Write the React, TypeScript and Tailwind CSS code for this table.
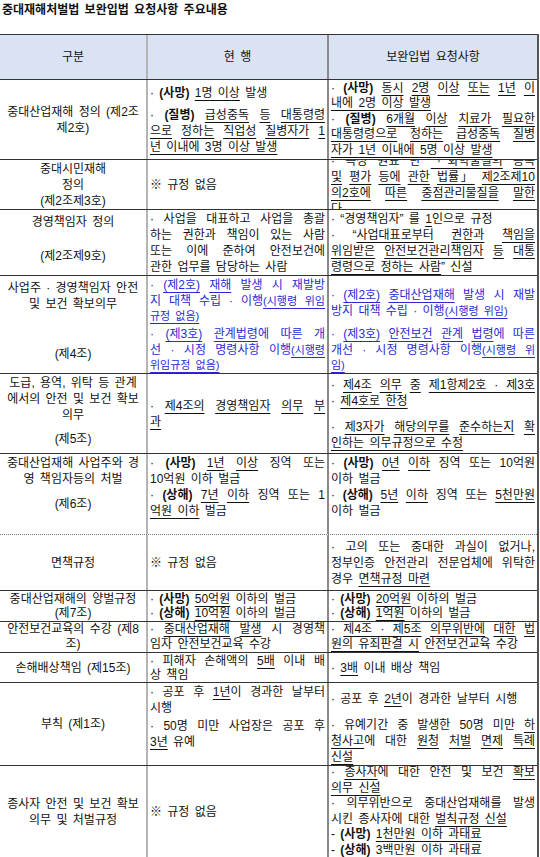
import type { ReactNode } from 'react'

// *x* bold, _x_ underlined, {x} small + underlined (시행령 notes)
function rich(src: string): ReactNode[] {
  const out: ReactNode[] = []
  const re = /\*([^*]+)\*|_([^_]+)_|\{([^}]+)\}/g
  let last = 0
  let k = 0
  let m: RegExpExecArray | null
  while ((m = re.exec(src))) {
    if (m.index > last) out.push(src.slice(last, m.index))
    if (m[1]) out.push(<b key={k++} className="font-bold">{m[1]}</b>)
    else if (m[2])
      out.push(
        <span key={k++} className="underline decoration-1 underline-offset-[3px]">
          {m[2]}
        </span>
      )
    else
      out.push(
        <span key={k++} className="text-[11px] underline decoration-1 underline-offset-[3px]">
          {m[3]}
        </span>
      )
    last = re.lastIndex
  }
  if (last < src.length) out.push(src.slice(last))
  return out
}

function L({ t, j, h = 'h-4 leading-4' }: { t: string; j?: boolean; h?: string }) {
  return <div className={`${h} ${j ? 'text-justify [text-align-last:justify]' : ''}`}>{rich(t)}</div>
}

function Gap({ h }: { h: string }) {
  return <div className={`${h} shrink-0`} />
}

type RowProps = {
  h: string
  a: ReactNode
  b: ReactNode
  c: ReactNode
  line?: string
  aCls?: string
  bCls?: string
  cCls?: string
  blue?: boolean
}

function Row({ h, a, b, c, line = 'border-b border-[#333]', aCls = 'justify-center', bCls = 'justify-center', cCls = 'justify-center', blue }: RowProps) {
  return (
    <div className={`flex ${h} ${line}`}>
      <div className={`flex w-[148px] shrink-0 flex-col items-center overflow-hidden border-r-2 border-[#b4b4b4] text-center ${aCls}`}>
        {a}
      </div>
      <div className={`flex w-[181px] shrink-0 flex-col overflow-hidden border-r-2 border-[#8a8a8a] px-[2px] ${bCls} ${blue ? 'text-[#2a2ad4]' : ''}`}>
        {b}
      </div>
      <div className={`flex min-w-0 flex-1 flex-col overflow-hidden px-[2px] ${cCls} ${blue ? 'text-[#2a2ad4]' : ''}`}>
        {c}
      </div>
    </div>
  )
}

const T = 'h-[15.5px] leading-[15.5px]'

export default function App() {
  return (
    <div className="h-[857px] w-[540px] overflow-hidden bg-white font-['Liberation_Sans','Noto_Sans_CJK_KR',sans-serif] text-[12px] text-[#111] [word-spacing:2px]">
      <div className="h-[34px] pl-[2px] pt-[2px] text-[12px] font-bold leading-4">중대재해처벌법 보완입법 요청사항 주요내용</div>

      <div className="w-[539px] border-r-2 border-[#555]">
        {/* header */}
        <div className="flex h-[46px] border-y border-[#333] bg-[#dae3f3]">
          <div className="grid w-[148px] shrink-0 place-items-center border-r-2 border-[#b4b4b4]">구분</div>
          <div className="grid w-[181px] shrink-0 place-items-center border-r-2 border-[#8a8a8a]">현 행</div>
          <div className="grid flex-1 place-items-center">보완입법 요청사항</div>
        </div>

        <Row
          h="h-[80px]"
          a={<><L t="중대산업재해 정의 (제2조" /><L t="제2호)" /></>}
          b={
            <>
              <L t="· *(사망)* _1명 이상_ 발생" />
              <Gap h="h-[6px]" />
              <L j t="· *(질병)* _급성중독_ _등_ _대통령령_" />
              <L j t="_으로_ _정하는_ _직업성_ _질병자가_ _1_" />
              <L t="_년 이내에 3명 이상 발생_" />
            </>
          }
          c={
            <>
              <L j h={T} t="· *(사망)* _동시_ _2명_ _이상_ _또는_ _1년_ _이_" />
              <L h={T} t="_내에 2명 이상 발생_" />
              <L j h={T} t="· *(질병)* _6개월_ _이상_ _치료가_ _필요한_" />
              <L j h={T} t="_대통령령으로_ _정하는_ _급성중독_ _질병_" />
              <L h={T} t="_자가 1년 이내에 5명 이상 발생_" />
            </>
          }
        />

        <Row
          h="h-[50px]"
          a={<><L t="중대시민재해" /><L t="정의" /><L t="(제2조제3호)" /></>}
          b={<L t="※ 규정 없음" />}
          c={
            <>
              <L j t="· 특정 원료 단 _「화학물질의_ _등록_" />
              <L j t="_및_ _평가_ _등에_ _관한_ _법률」_ _제2조제10_" />
              <L j t="_의2호에_ _따른_ _중점관리물질을_ _말한_" />
              <L t="_다_" />
            </>
          }
        />

        <Row
          h="h-[66px]"
          a={<><L t="경영책임자 정의" /><Gap h="h-[18px]" /><L t="(제2조제9호)" /><Gap h="h-[8px]" /></>}
          b={
            <>
              <L j t="· 사업을 대표하고 사업을 총괄" />
              <L j t="하는 권한과 책임이 있는 사람" />
              <L j t="또는 이에 준하여 안전보건에" />
              <L t="관한 업무를 담당하는 사람" />
            </>
          }
          c={
            <>
              <L t="· “경영책임자” 를 _1_인으로 규정" />
              <L j t="· “_사업대표로부터_ _권한과_ _책임을_" />
              <L j t="_위임받은_ _안전보건관리책임자_ _등_ _대통_" />
              <L t="_령령으로 정하는 사람_” 신설" />
            </>
          }
        />

        <Row
          h="h-[98px]"
          blue
          aCls="justify-between pt-[4px] pb-[11px]"
          cCls="justify-end pb-[1px]"
          a={
            <>
              <div><L t="사업주 · 경영책임자 안전" /><L t="및 보건 확보의무" /></div>
              <L t="(제4조)" />
            </>
          }
          b={
            <>
              <L j t="· _(제2호)_ _재해_ 발생 시 재발방" />
              <L j t="지 대책 수립 · 이행{(시행령 위임}" />
              <L h="h-[14px] leading-[14px]" t="{규정 없음)}" />
              <Gap h="h-[3px]" />
              <L j t="· _(제3호)_ _관계법령_에 따른 개" />
              <L j t="선 · 시정 명령사항 이행{(시행령}" />
              <L h="h-[14px] leading-[14px]" t="{위임규정 없음)}" />
            </>
          }
          c={
            <>
              <L j t="· _(제2호)_ _중대산업재해_ 발생 시 재발" />
              <L t="방지 대책 수립 · 이행{(시행령 위임)}" />
              <Gap h="h-[7px]" />
              <L j t="· _(제3호)_ _안전보건_ _관계_ _법령_에 따른" />
              <L j t="개선 · 시정 명령사항 이행{(시행령 위}" />
              <L h="h-[14px] leading-[14px]" t="{임)}" />
            </>
          }
        />

        <Row
          h="h-[80px]"
          aCls="justify-start pt-[1px]"
          a={
            <>
              <L t="도급, 용역, 위탁 등 관계" />
              <L t="에서의 안전 및 보건 확보" />
              <L t="의무" />
              <Gap h="h-[8px]" />
              <L t="(제5조)" />
            </>
          }
          b={
            <>
              <L j t="· _제4조의_ _경영책임자_ _의무_ _부_" />
              <L t="_과_" />
            </>
          }
          c={
            <>
              <L j t="· _제4조_ _의무_ _중_ _제1항제2호 · 제3호_" />
              <L t="· _제4호로 한정_" />
              <Gap h="h-[10px]" />
              <L j t="· _제3자가_ _해당의무를_ _준수하는지_ _확_" />
              <L t="_인하는 의무규정으로 수정_" />
            </>
          }
        />

        <Row
          h="h-[81px]"
          line="border-b border-dotted border-[#777]"
          aCls="justify-start pt-[1px]"
          bCls="justify-start pt-[1px]"
          cCls="justify-start pt-[1px]"
          a={
            <>
              <L t="중대산업재해 사업주와 경" />
              <L t="영 책임자등의 처벌" />
              <Gap h="h-[9px]" />
              <L t="(제6조)" />
            </>
          }
          b={
            <>
              <L j t="· *(사망)* _1년_ _이상_ 징역 또는" />
              <L t="10억원 이하 벌금" />
              <L j t="· *(상해)* _7년_ _이하_ 징역 또는 1" />
              <L t="_억원 이하_ 벌금" />
            </>
          }
          c={
            <>
              <L j t="· *(사망)* _0년_ _이하_ 징역 또는 10억원" />
              <L t="이하 벌금" />
              <L j t="· *(상해)* _5년_ _이하_ 징역 또는 _5천만원_" />
              <L t="이하 벌금" />
            </>
          }
        />

        <Row
          h="h-[56px]"
          cCls="justify-start pt-[4px]"
          a={<L t="면책규정" />}
          b={<L t="※ 규정 없음" />}
          c={
            <>
              <L j t="· 고의 또는 중대한 과실이 없거나," />
              <L j t="정부인증 안전관리 전문업체에 위탁한" />
              <L t="경우 _면책규정 마련_" />
            </>
          }
        />

        <Row
          h="h-[31px]"
          a={<><L h="h-[14px] leading-[14px]" t="중대산업재해의 양벌규정" /><L h="h-[14px] leading-[14px]" t="(제7조)" /></>}
          b={
            <>
              <L h="h-[14px] leading-[14px]" t="· *(사망)* _50억원_ 이하의 벌금" />
              <L h="h-[14px] leading-[14px]" t="· *(상해)* _10억원_ 이하의 벌금" />
            </>
          }
          c={
            <>
              <L h="h-[14px] leading-[14px]" t="· *(사망)* _20억원_ 이하의 벌금" />
              <L h="h-[14px] leading-[14px]" t="· *(상해)* _1억원_ 이하의 벌금" />
            </>
          }
        />

        <Row
          h="h-[31px]"
          a={<><L h="h-[15px] leading-[15px]" t="안전보건교육의 수강 (제8" /><L h="h-[15px] leading-[15px]" t="조)" /></>}
          b={
            <>
              <L j h="h-[15px] leading-[15px]" t="· _중대산업재해_ _발생_ 시 경영책" />
              <L h="h-[15px] leading-[15px]" t="임자 안전보건교육 수강" />
            </>
          }
          c={
            <>
              <L j h="h-[15px] leading-[15px]" t="· _제4조 · 제5조_ _의무위반에_ _대한_ _법_" />
              <L h="h-[15px] leading-[15px]" t="_원의 유죄판결 시_ 안전보건교육 수강" />
            </>
          }
        />

        <Row
          h="h-[30px]"
          a={<L t="손해배상책임 (제15조)" />}
          b={
            <>
              <L j h="h-[14px] leading-[14px]" t="· 피해자 손해액의 _5배_ 이내 배" />
              <L h="h-[14px] leading-[14px]" t="상 책임" />
            </>
          }
          c={<L t="· _3배_ 이내 배상 책임" />}
        />

        <Row
          h="h-[83px]"
          bCls="justify-start pt-[1px]"
          cCls="justify-end"
          a={<L t="부칙 (제1조)" />}
          b={
            <>
              <L j t="· 공포 후 _1년_이 경과한 날부터" />
              <L t="시행" />
              <Gap h="h-[2px]" />
              <L j t="· 50명 미만 사업장은 공포 후" />
              <L t="_3년_ 유예" />
            </>
          }
          c={
            <>
              <L t="· 공포 후 _2년_이 경과한 날부터 시행" />
              <Gap h="h-[10px]" />
              <L j t="· 유예기간 중 발생한 50명 미만 _하_" />
              <L j t="_청사고_에 대한 _원청_ _처벌_ _면제_ _특례_" />
              <L t="_신설_" />
            </>
          }
        />

        <Row
          h="h-[92px]"
          a={<><L t="종사자 안전 및 보건 확보" /><L t="의무 및 처벌규정" /></>}
          b={<L t="※ 규정 없음" />}
          c={
            <>
              <L j h={T} t="· _종사자_에 대한 안전 및 보건 _확보_" />
              <L h={T} t="_의무 신설_" />
              <L j h={T} t="· 의무위반으로 중대산업재해를 발생" />
              <L h={T} t="시킨 종사자에 대한 _벌칙규정 신설_" />
              <L h={T} t="- *(사망)* _1천만원 이하 과태료_" />
              <L h={T} t="- *(상해)* _3백만원 이하 과태료_" />
            </>
          }
        />
      </div>
    </div>
  )
}
